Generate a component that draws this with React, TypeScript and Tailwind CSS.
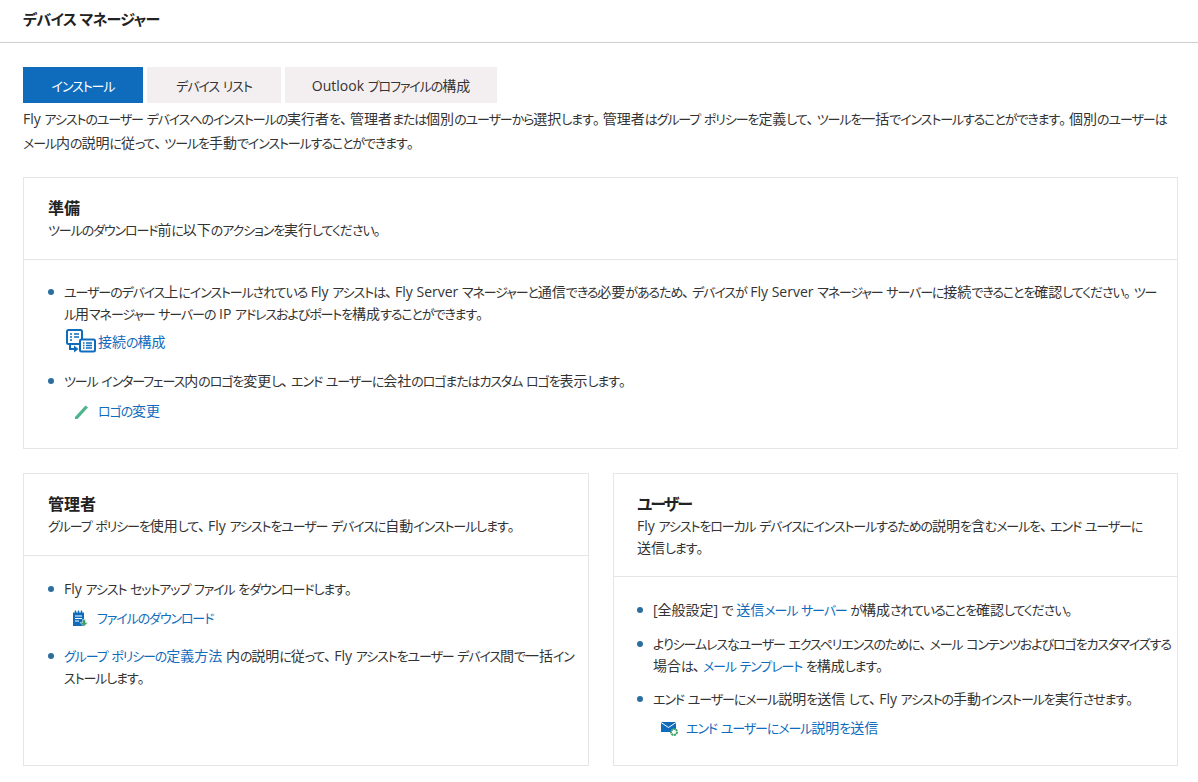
import type { ReactNode } from "react";

const LINK = "text-[#0f6cbd]";

// kana in the reference are set much narrower than kanji, so they get their own run
function T({ children }: { children: string }) {
  const parts = children.split(/([\u3041-\u30ff]+|[、。]+)/);
  return (
    <span>
      {parts.map((p, i) => {
        if (i % 2 === 0) return <span key={i}>{p}</span>;
        if (p[0] === "、" || p[0] === "。") {
          return (
            <span key={i} className="tracking-[3px]">
              {p}
            </span>
          );
        }
        return (
          <span key={i} className="text-[13px] tracking-[-1.1px]">
            {p}
          </span>
        );
      })}
    </span>
  );
}

function Bullet({ children }: { children: ReactNode }) {
  return (
    <div className="flex">
      <span className="w-[6px] h-[6px] mt-[8px] ml-[1px] shrink-0 rounded-full bg-[#2b6f9f]" />
      <div className="ml-[10px] leading-[22px]">{children}</div>
    </div>
  );
}

function ActionLink({ icon, label, className }: { icon: ReactNode; label: string; className: string }) {
  return (
    <div className={`flex items-center ${className}`}>
      {icon}
      <span className={LINK}>
        <T>{label}</T>
      </span>
    </div>
  );
}

function CardHead({ title, children, className }: { title: ReactNode; children: string; className: string }) {
  return (
    <div className={`pr-[24px] pt-[20px] border-b border-[#e6e6e6] ${className}`}>
      <div className="text-[16px] leading-[21px] font-bold text-[#222]">{title}</div>
      <div className="leading-[22px]">
        <T>{children}</T>
      </div>
    </div>
  );
}

const ConnectIcon = (
  <svg width="30" height="26" viewBox="0 0 30 26" className="mr-[2px]" fill="none">
    <rect x="1" y="1" width="15" height="14" rx="1.5" stroke="#0f6cbd" strokeWidth="2" />
    <path d="M4 5h2M8 5h5M4 8h2M8 8h5M4 11h2" stroke="#0f6cbd" strokeWidth="1.3" />
    <rect x="14" y="10.5" width="15" height="12" rx="1.5" fill="#fff" stroke="#0f6cbd" strokeWidth="2" />
    <path d="M17 14h1.5M20 14h6M17 16.5h1.5M20 16.5h6M17 19h1.5M20 19h6" stroke="#0f6cbd" strokeWidth="1.3" />
    <path d="M4 15v5h5" stroke="#0f6cbd" strokeWidth="2" />
    <path d="M8 16.5l4.5 3.5L8 23.5z" fill="#0f6cbd" />
  </svg>
);

const PenIcon = (
  <svg width="16" height="15" viewBox="0 0 16 15" className="mr-[8px]" fill="none">
    <path d="M1 13L11.5 1.5l2.5 2L3.5 15H1z" fill="#4cb58a" />
  </svg>
);

const DownloadIcon = (
  <svg width="16" height="17" viewBox="0 0 16 17" className="mr-[9px]" fill="none">
    <path d="M1 2.5h11V16H1z" fill="#0f6cbd" />
    <path d="M3.5 0.5v3M6.5 0.5v3M9.5 0.5v3" stroke="#0f6cbd" strokeWidth="1.4" />
    <path d="M3 6h7M3 8.5h7M3 11h4" stroke="#fff" />
    <path d="M10.5 9.5h3v3H16l-4 4-4-4h2.5z" fill="#3f9f6a" stroke="#fff" strokeWidth="0.5" />
  </svg>
);

const MailIcon = (
  <svg width="18" height="15" viewBox="0 0 18 15" className="mr-[7px]" fill="none">
    <path d="M0 1h15v10H0z" fill="#0f6cbd" />
    <path d="M0 1.5l7.5 5 7.5-5" stroke="#fff" />
    <circle cx="13" cy="11" r="3" fill="#fff" stroke="#3f9f6a" strokeWidth="2" strokeDasharray="2 0.6" />
  </svg>
);

export default function App() {
  return (
    <div className="w-[1198px] h-[782px] overflow-hidden bg-white text-[14px] text-[#333] font-['Open_Sans','Noto_Sans_CJK_JP',sans-serif] [font-feature-settings:'palt']">
      <div className="h-[43px] pl-[23px] pt-[8px] border-b border-[#cfcfcf] text-[15px] tracking-[-0.7px] leading-[22px] font-bold text-[#222]">
        デバイス マネージャー
      </div>

      <div className="px-[23px] pr-[20px] pt-[24px]">
        <div className="flex gap-[4px]">
          <div className="w-[120px] h-[36px] pt-[1px] flex items-center justify-center bg-[#0f6cbd] text-white">
            <T>インストール</T>
          </div>
          <div className="w-[134px] h-[36px] pt-[1px] flex items-center justify-center bg-[#f3eff0]">
            <T>デバイス リスト</T>
          </div>
          <div className="w-[212px] h-[36px] pt-[1px] flex items-center justify-center bg-[#f3eff0]">
            <T>Outlook プロファイルの構成</T>
          </div>
        </div>

        <p className="mt-[4px] pr-[6px] leading-[24px]">
          <T>
            Fly アシストのユーザー デバイスへのインストールの実行者を、管理者または個別のユーザーから選択します。管理者はグループ ポリシーを定義して、ツールを一括でインストールすることができます。個別のユーザーはメール内の説明に従って、ツールを手動でインストールすることができます。
          </T>
        </p>

        <div className="mt-[22px] h-[272px] border border-[#e6e6e6]">
          <CardHead title="準備" className="pl-[24px] h-[82px]">
            ツールのダウンロード前に以下のアクションを実行してください。
          </CardHead>
          <div className="pl-[23px] pr-[2px] pt-[21px]">
            <Bullet>
              <T>
                ユーザーのデバイス上にインストールされている Fly アシストは、Fly Server マネージャーと通信できる必要があるため、デバイスが Fly Server マネージャー サーバーに接続できることを確認してください。ツー
              </T>
              <br />
              <T>ル用マネージャー サーバーの IP アドレスおよびポートを構成することができます。</T>
            </Bullet>
            <ActionLink icon={ConnectIcon} label="接続の構成" className="ml-[19px] mt-[4px] h-[26px]" />
            <div className="mt-[15px]">
              <Bullet>
                <T>ツール インターフェース内のロゴを変更し、エンド ユーザーに会社のロゴまたはカスタム ロゴを表示します。</T>
              </Bullet>
            </div>
            <ActionLink icon={PenIcon} label="ロゴの変更" className="ml-[27px] mt-[8px] h-[22px]" />
          </div>
        </div>

        <div className="mt-[24px] grid grid-cols-[566px_565px] gap-[24px]">
          <div className="h-[293px] border border-[#e6e6e6]">
            <CardHead title="管理者" className="pl-[24px] h-[82px]">
              グループ ポリシーを使用して、Fly アシストをユーザー デバイスに自動インストールします。
            </CardHead>
            <div className="pl-[23px] pr-[5px] pt-[22px]">
              <Bullet>
                <T>Fly アシスト セットアップ ファイル をダウンロードします。</T>
              </Bullet>
              <ActionLink icon={DownloadIcon} label="ファイルのダウンロード" className="ml-[25px] mt-[7px] h-[22px]" />
              <div className="mt-[16px]">
                <Bullet>
                  <span className={LINK}>
                    <T>グループ ポリシーの定義方法</T>
                  </span>{" "}
                  <T>内の説明に従って、Fly アシストをユーザー デバイス間で一括インストールします。</T>
                </Bullet>
              </div>
            </div>
          </div>

          <div className="h-[293px] border border-[#e6e6e6]">
            <CardHead title={<span className="tracking-[-2px]">ユーザー</span>} className="pl-[23px] h-[103px]">
              Fly アシストをローカル デバイスにインストールするための説明を含むメールを、エンド ユーザーに送信します。
            </CardHead>
            <div className="pl-[22px] pr-[2px] pt-[22px]">
              <Bullet>
                <T>[全般設定] で </T>
                <span className={LINK}>
                  <T>送信メール サーバー</T>
                </span>
                <T> が構成されていることを確認してください。</T>
              </Bullet>
              <div className="mt-[12px]">
                <Bullet>
                  <T>よりシームレスなユーザー エクスペリエンスのために、メール コンテンツおよびロゴをカスタマイズする場合は、</T>
                  <span className={LINK}>
                    <T>メール テンプレート</T>
                  </span>
                  <T> を構成します。</T>
                </Bullet>
              </div>
              <div className="mt-[11px]">
                <Bullet>
                  <T>エンド ユーザーにメール説明を送信 して、Fly アシストの手動インストールを実行させます。</T>
                </Bullet>
              </div>
              <ActionLink icon={MailIcon} label="エンド ユーザーにメール説明を送信" className="ml-[25px] mt-[7px] h-[22px]" />
            </div>
          </div>
        </div>
      </div>
    </div>
  );
}
